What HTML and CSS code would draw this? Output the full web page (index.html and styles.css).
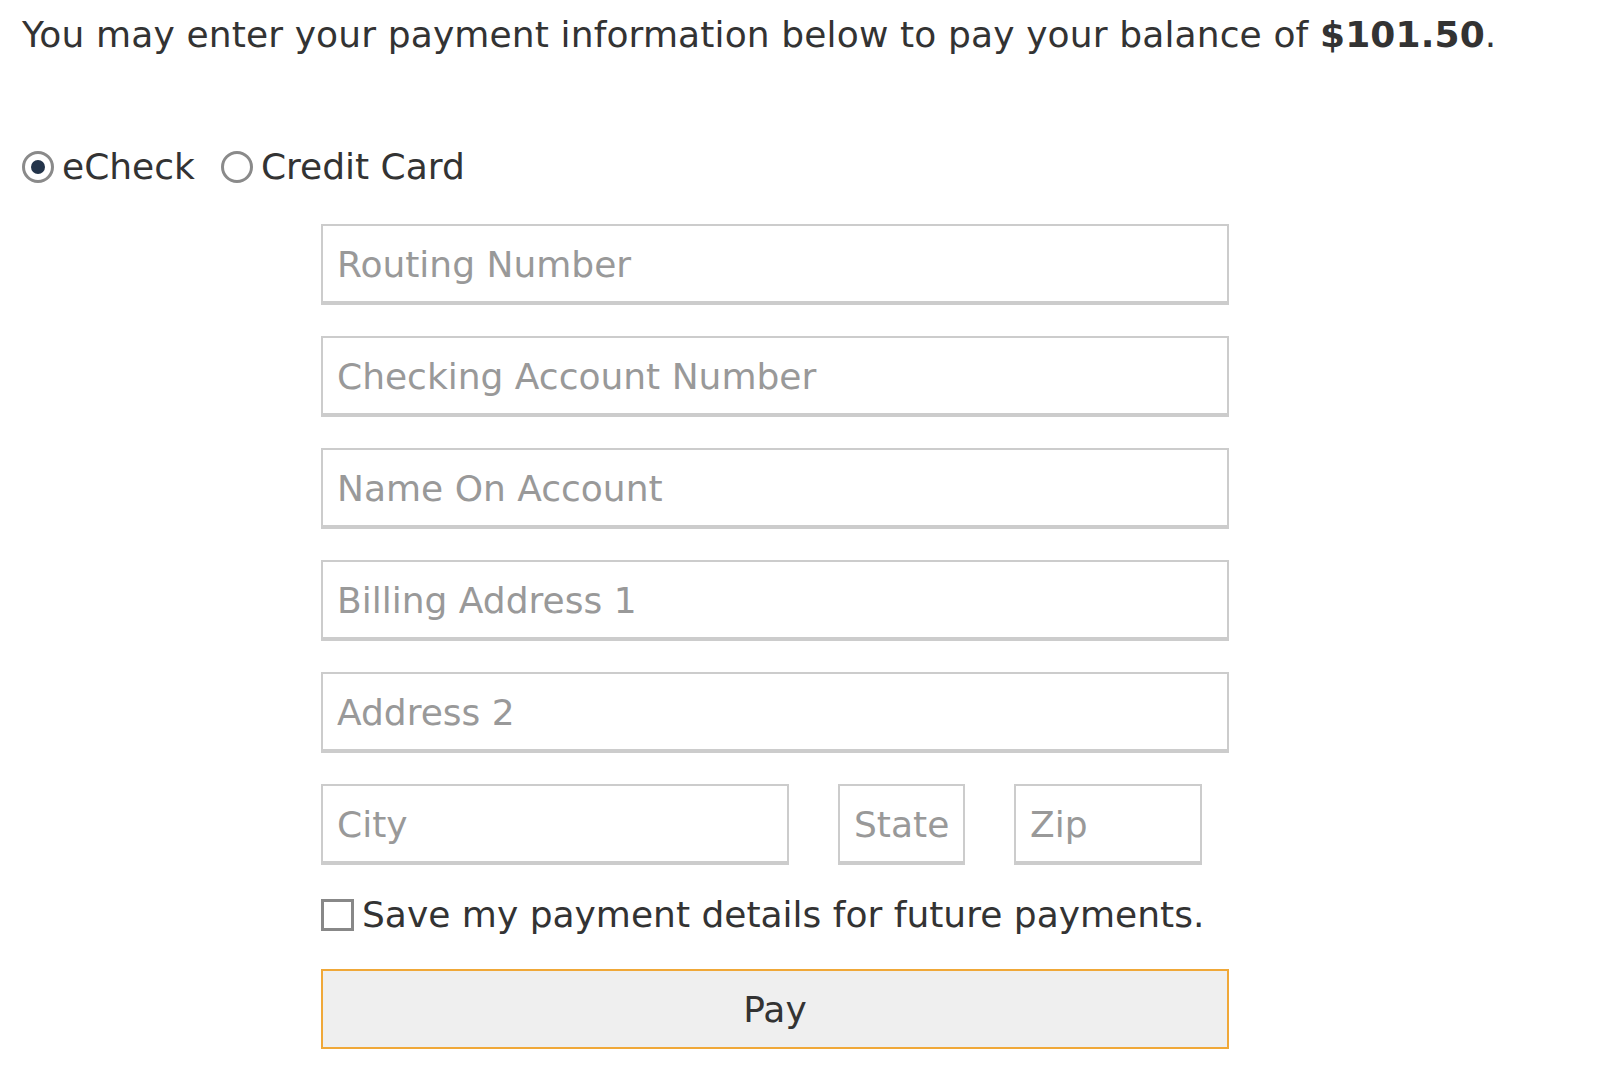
FILE: index.html
```html
<!DOCTYPE html>
<html lang="en">
<head>
<meta charset="utf-8">
<title>Payment</title>
<link rel="stylesheet" href="styles.css">
</head>
<body>
<div class="page">
  <p class="intro">You may enter your payment information below to pay your balance of <strong>$101.50</strong>.</p>
  <div class="methods">
    <label class="method"><span class="radio checked"></span>eCheck</label>
    <label class="method"><span class="radio"></span>Credit Card</label>
  </div>
  <form class="form">
    <input class="field" type="text" placeholder="Routing Number">
    <input class="field" type="text" placeholder="Checking Account Number">
    <input class="field" type="text" placeholder="Name On Account">
    <input class="field" type="text" placeholder="Billing Address 1">
    <input class="field" type="text" placeholder="Address 2">
    <div class="row">
      <input class="field city" type="text" placeholder="City">
      <input class="field state" type="text" placeholder="State">
      <input class="field zip" type="text" placeholder="Zip">
    </div>
    <label class="save"><span class="check"></span>Save my payment details for future payments.</label>
    <button class="pay" type="button">Pay</button>
  </form>
</div>
</body>
</html>
```

FILE: styles.css
```css
* { box-sizing: border-box; }
html, body { margin: 0; padding: 0; background: #fff; }
body {
  font-family: "DejaVu Sans", Verdana, sans-serif;
  color: #333;
}
.page {
  padding: 14px 0 0 22px;
}
.intro {
  margin: 0;
  font-size: 36px;
  line-height: 42px;
  letter-spacing: 0.13px;
}
.intro strong { font-weight: bold; }
.methods {
  display: flex;
  align-items: center;
  gap: 26px;
  margin-top: 90px;
  height: 42px;
}
.method {
  display: flex;
  align-items: center;
  font-size: 36px;
  line-height: 42px;
}
.radio {
  width: 32px;
  height: 32px;
  border: 3px solid #8a8a8a;
  border-radius: 50%;
  margin-right: 8px;
  display: flex;
  align-items: center;
  justify-content: center;
}
.radio.checked::after {
  content: "";
  width: 14px;
  height: 14px;
  border-radius: 50%;
  background: #23344a;
}
.form {
  margin: 36px 0 0 299px;
  width: 908px;
  display: flex;
  flex-direction: column;
  gap: 31px;
}
.field {
  display: block;
  width: 100%;
  height: 81px;
  border: 2px solid #ccc;
  border-bottom-width: 4px;
  padding: 2px 14px 0;
  font-family: "DejaVu Sans", Verdana, sans-serif;
  font-size: 36px;
  color: #333;
  background: #fff;
  border-radius: 0;
  outline: none;
}
.field::placeholder { color: #999; opacity: 1; }
.row {
  display: flex;
  gap: 49px;
}
.row .city { width: 468px; }
.row .state { width: 127px; }
.row .zip { width: 188px; }
.save {
  display: flex;
  align-items: center;
  font-size: 36px;
  line-height: 42px;
  margin-top: -2px;
}
.check {
  width: 33px;
  height: 32px;
  border: 3px solid #888;
  margin-right: 8px;
  background: #fff;
}
.pay {
  margin-top: 2px;
  width: 100%;
  height: 80px;
  border: 2px solid #f0a838;
  background: #efefef;
  font-family: "DejaVu Sans", Verdana, sans-serif;
  font-size: 36px;
  color: #333;
  border-radius: 0;
  padding: 0;
}
```
